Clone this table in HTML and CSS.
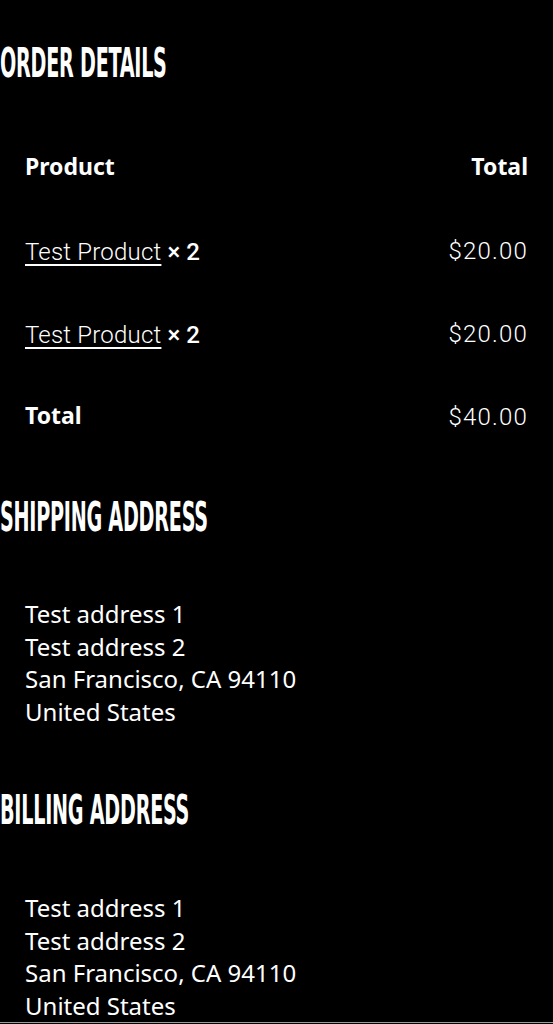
FILE: index.html
```html
<!DOCTYPE html>
<html>
<head>
<meta charset="utf-8">
<link rel="stylesheet" href="styles.css">
</head>
<body>
<section class="order">
  <h2 class="title"><span class="title-text">Order details</span></h2>
  <table class="order-table">
    <thead>
      <tr><th class="col-name">Product</th><th class="col-total">Total</th></tr>
    </thead>
    <tbody>
      <tr><td class="col-name"><a class="product-link" href="#">Test Product</a> <strong class="qty">× 2</strong></td><td class="col-total">$20.00</td></tr>
      <tr><td class="col-name"><a class="product-link" href="#">Test Product</a> <strong class="qty">× 2</strong></td><td class="col-total">$20.00</td></tr>
    </tbody>
    <tfoot>
      <tr><th class="col-name">Total</th><td class="col-total">$40.00</td></tr>
    </tfoot>
  </table>
</section>
<section class="address-block">
  <h2 class="title title-ship"><span class="title-text">Shipping address</span></h2>
  <address class="address">Test address 1<br>Test address 2<br>San Francisco, CA 94110<br>United States</address>
</section>
<section class="address-block">
  <h2 class="title title-bill"><span class="title-text">Billing address</span></h2>
  <address class="address address-last">Test address 1<br>Test address 2<br>San Francisco, CA 94110<br>United States</address>
</section>
</body>
</html>
```
FILE: styles.css
```css
html, body {
  margin: 0;
  padding: 0;
  background: #000;
  color: #fff;
}
body {
  font-family: "Noto Sans", "Open Sans", sans-serif;
  overflow: hidden;
}
.title {
  margin: 0;
  padding-top: 40px;
  height: 46px;
  line-height: 46px;
  font-family: "DejaVu Sans", sans-serif;
  font-stretch: condensed;
  font-weight: 700;
  font-size: 41px;
  text-transform: uppercase;
  white-space: nowrap;
}
.title-text {
  display: inline-block;
  transform: scaleX(0.52);
  transform-origin: left center;
  letter-spacing: -0.5px;
}
.order-table {
  margin-top: 40px;
  width: 100%;
  border-collapse: collapse;
  font-size: 23px;
}
.order-table tr {
  height: 83px;
}
.order-table th, .order-table td {
  padding: 0 25px;
  vertical-align: middle;
}
.order-table th {
  font-weight: 700;
  line-height: 28px;
  padding-bottom: 3px;
}
.col-name { text-align: left; }
.col-total { text-align: right; }
.product-link {
  color: #fff;
  font-family: Roboto, sans-serif;
  font-weight: 300;
  font-size: 24px;
  letter-spacing: 0.2px;
  text-decoration: underline;
  text-decoration-thickness: 1.5px;
  text-underline-offset: 4px;
}
.qty {
  font-family: Roboto, sans-serif;
  font-weight: 500;
  font-size: 24px;
}
td.col-total {
  font-family: Roboto, sans-serif;
  font-weight: 300;
  font-size: 24px;
  letter-spacing: 1.2px;
}
.title-ship {
  padding-top: 36px;
}
.address {
  font-style: normal;
  font-size: 24px;
  line-height: 32.5px;
  padding: 0 25px;
  margin-top: 58px;
}
.title-bill {
  padding-top: 59px;
}
.address-last {
  margin-top: 59px;
  border-bottom: 1px solid #9a9a9a;
}
```
